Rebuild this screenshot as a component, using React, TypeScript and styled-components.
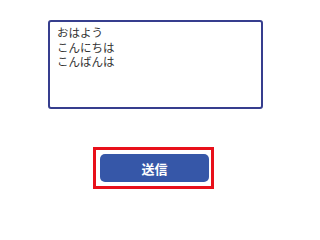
import React from "react"
import styled, { createGlobalStyle } from "styled-components"

const GlobalStyle = createGlobalStyle`
    html, body {
        margin: 0;
        padding: 0;
        background: #fff;
    }
`

export default function App() {
    return (
        <>
            <GlobalStyle />
            <SPage>
                <SMessageBox
                    defaultValue={"おはよう\nこんにちは\nこんばんは"}
                    spellCheck={false}
                />
                <SHighlight>
                    <SSubmitButton type="button">送信</SSubmitButton>
                </SHighlight>
            </SPage>
        </>
    )
}

const SPage = styled.div`
    display: flex;
    flex-direction: column;
    align-items: flex-start;
    padding: 20px 0 0 48px;
    width: 300px;
    height: 200px;
    box-sizing: border-box;
`

const SMessageBox = styled.textarea`
    box-sizing: border-box;
    width: 215px;
    height: 89px;
    margin: 0;
    padding: 3px 7px;
    border: 2px solid #363e8e;
    border-radius: 3px;
    outline: none;
    resize: none;
    overflow: hidden;
    font-family: "Noto Sans CJK JP", sans-serif;
    font-size: 11.5px;
    line-height: 14.5px;
    color: #333;
    background: #fff;
`

const SHighlight = styled.div`
    display: flex;
    box-sizing: border-box;
    width: 121px;
    height: 42px;
    margin: 38px 0 0 45px;
    padding: 4px 2px 4px 4px;
    border: 3px solid #e8101a;
`

const SSubmitButton = styled.button`
    flex: 1;
    margin: 0;
    padding: 0;
    border: none;
    border-radius: 5px;
    background: #3657a8;
    color: #fff;
    font-family: "Noto Sans CJK JP", sans-serif;
    font-size: 13px;
    font-weight: 700;
    cursor: pointer;
`
